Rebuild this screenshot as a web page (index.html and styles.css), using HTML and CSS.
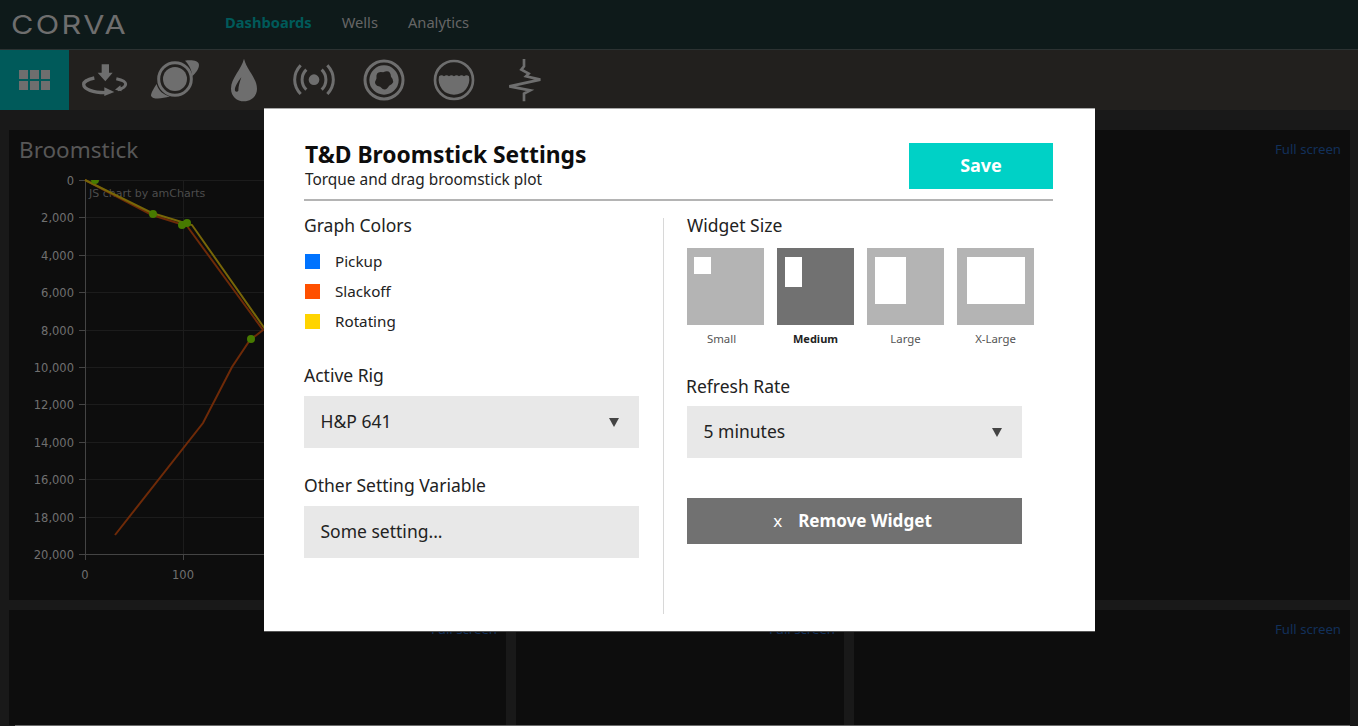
FILE: index.html
```html
<!DOCTYPE html>
<html lang="en">
<head>
  <meta charset="UTF-8" />
  <title>Corva - T&amp;D Broomstick Settings</title>
  <link rel="stylesheet" href="styles.css">
</head>
<body>
  <div class="app">
    <header class="topbar">
      <div class="logo-wrap"><span class="logo">CORVA</span></div>
      <nav class="mainnav">
        <a class="active">Dashboards</a>
        <a>Wells</a>
        <a>Analytics</a>
      </nav>
    </header>

    <div class="toolbar">
      <div class="tool-home">
        <div class="dots"><i></i><i></i><i></i><i></i><i></i><i></i></div>
      </div>
      <svg class="tool tool-a" viewBox="15 30 150 110">
        <path d="M80 37h22v25h11L91 88 68 62h12z"/>
        <path class="line" stroke-width="10" d="M58 78C38 82 26 90 26 97C26 112 55 122 90 122"/>
        <path d="M88 106L118 120L88 132z"/>
        <path class="line" stroke-width="9" d="M124 80C142 84 152 90 152 96C152 104 142 110 128 113"/>
        <path d="M136 100L120 113L140 118z"/>
      </svg>
      <svg class="tool tool-b" viewBox="225 20 150 125">
        <path d="M330 25C350 22 372 25 372 38C372 50 362 62 352 72C350 50 340 35 330 25z"/>
        <path d="M245 95C235 110 228 122 228 130C232 142 260 140 285 132C265 128 250 115 245 95z"/>
        <circle class="line" stroke-width="9" cx="300" cy="80" r="49"/>
        <circle cx="300" cy="80" r="36"/>
      </svg>
      <svg class="tool tool-c" viewBox="465 20 85 132">
        <path d="M507 22C515 55 546 80 546 112C546 135 528 150 507 150C486 150 468 135 468 112C468 80 499 55 507 22z"/>
        <path class="cut" d="M499 78C488 92 478 108 480 118C482 122 488 122 490 118C490 105 494 92 499 78z"/>
      </svg>
      <svg class="tool tool-d" viewBox="25 38 126 94">
        <circle cx="88" cy="85" r="16"/>
        <path class="line" stroke-width="9" d="M65 55C48 72 48 98 65 115M111 55C128 72 128 98 111 115"/>
        <path class="line" stroke-width="9" d="M48 42C24 68 24 102 48 128M128 42C152 68 152 102 128 128"/>
      </svg>
      <svg class="tool tool-e" viewBox="235 20 126 126">
        <circle class="line" stroke-width="9" cx="298" cy="83" r="57"/>
        <circle cx="298" cy="83" r="44"/>
        <path class="cut" d="M295.600 60.100Q317 50.100 319 73.600Q335.200 90.900 313.400 100.100Q302 120.800 286.500 102.900Q263.300 98.500 275.500 78.200Q272.600 54.800 295.600 60.100z"/>
      </svg>
      <svg class="tool tool-f" viewBox="445 20 126 126">
        <circle class="line" stroke-width="8" cx="508" cy="83" r="57"/>
        <path d="M463 72Q471 66 478 72Q486 66 493 72Q500 66 508 72Q516 66 523 72Q531 66 538 72Q546 66 553 72A46 46 0 1 1 463 72z"/>
      </svg>
      <svg class="tool tool-g" viewBox="665 15 105 133">
        <path class="line" stroke-width="8" d="M716 18V40L708 50L730 62L722 70L765 80L672 100L735 112L716 122V145"/>
      </svg>
    </div>

    <main class="board">
      <section class="panel panel-wide">
        <h2 class="panel-title">Broomstick</h2>
        <a class="fullscreen">Full screen</a>
        <svg class="chart" viewBox="0 37 496 433" width="496" height="433">
          <g stroke="#1c1c1c" fill="none">
            <path d="M76 50.500H496M76 87.500H496M76 125.500H496M76 162.500H496M76 200.500H496M76 237.500H496M76 274.500H496M76 312.500H496M76 349.500H496M76 387.500H496M174.500 50V424"/>
          </g>
          <path d="M76.500 50V424.500H496M70 50.500h6M70 87.500h6M70 125.500h6M70 162.500h6M70 200.500h6M70 237.500h6M70 274.500h6M70 312.500h6M70 349.500h6M70 387.500h6M70 424.500h6M76.500 424v6M174.500 424v6" stroke="#444" fill="none"/>
          <g class="ticks" text-anchor="end">
            <text x="65" y="55">0</text>
            <text x="65" y="92">2,000</text>
            <text x="65" y="130">4,000</text>
            <text x="65" y="167">6,000</text>
            <text x="65" y="205">8,000</text>
            <text x="65" y="242">10,000</text>
            <text x="65" y="279">12,000</text>
            <text x="65" y="317">14,000</text>
            <text x="65" y="354">16,000</text>
            <text x="65" y="392">18,000</text>
            <text x="65" y="429">20,000</text>
          </g>
          <g class="ticks" text-anchor="middle">
            <text x="76" y="449">0</text>
            <text x="174" y="449">100</text>
          </g>
          <text class="credit" x="80" y="67">JS chart by amCharts</text>
          <path d="M76 50L143 85L178 96L254 200L241 210L223 237L194 293L106 405" fill="none" stroke="#6e2a08" stroke-width="2"/>
          <path d="M76 50L143 83L183 95L256 199" fill="none" stroke="#776608" stroke-width="2"/>
          <g fill="#477a00">
            <path d="M82 50a4 4 0 0 0 8 0z"/>
            <circle cx="144" cy="84" r="4"/>
            <circle cx="173" cy="95" r="4"/>
            <circle cx="178" cy="93" r="4"/>
            <circle cx="242" cy="209" r="4"/>
          </g>
        </svg>
      </section>
      <section class="panel panel-small">
        <a class="fullscreen">Full screen</a>
      </section>
      <section class="panel panel-small">
        <a class="fullscreen">Full screen</a>
      </section>
      <section class="panel panel-small">
        <a class="fullscreen">Full screen</a>
      </section>
    </main>
    <div class="pagebar"></div>
  </div>

  <div class="modal">
    <div class="modal-head">
      <div class="modal-heading">
        <h1>T&amp;D Broomstick Settings</h1>
        <p>Torque and drag broomstick plot</p>
      </div>
      <button class="btn-save">Save</button>
    </div>

    <div class="modal-body">
      <div class="col col-left">
        <h3>Graph Colors</h3>
        <ul class="colors">
          <li><span class="swatch swatch-blue"></span>Pickup</li>
          <li><span class="swatch swatch-orange"></span>Slackoff</li>
          <li><span class="swatch swatch-yellow"></span>Rotating</li>
        </ul>
        <h3 class="label-rig">Active Rig</h3>
        <div class="field">H&amp;P 641<span class="caret"></span></div>
        <h3 class="label-other">Other Setting Variable</h3>
        <div class="field">Some setting...</div>
      </div>

      <div class="col col-right">
        <h3>Widget Size</h3>
        <div class="sizes">
          <div class="size">
            <div class="size-box"><span class="inner inner-s"></span></div>
            <span class="size-name">Small</span>
          </div>
          <div class="size selected">
            <div class="size-box"><span class="inner inner-m"></span></div>
            <span class="size-name">Medium</span>
          </div>
          <div class="size">
            <div class="size-box"><span class="inner inner-l"></span></div>
            <span class="size-name">Large</span>
          </div>
          <div class="size">
            <div class="size-box"><span class="inner inner-xl"></span></div>
            <span class="size-name">X-Large</span>
          </div>
        </div>
        <h3 class="label-refresh">Refresh Rate</h3>
        <div class="field">5 minutes<span class="caret"></span></div>
        <button class="btn-remove"><span class="x">x</span>Remove Widget</button>
      </div>
    </div>
  </div>
</body>
</html>
```

FILE: styles.css
```css
* {
  box-sizing: border-box;
}

html, body {
  margin: 0;
  height: 100%;
  overflow: hidden;
}

body {
  font-family: "Noto Sans", sans-serif;
  background: #191919;
  color: #222;
}

.app {
  height: 726px;
  display: flex;
  flex-direction: column;
}

/* top nav */
.topbar {
  height: 50px;
  background: #0e1a1a;
  border-bottom: 1px solid #2c3232;
  display: flex;
  align-items: center;
  padding-left: 11px;
}

.logo-wrap {
  width: 214px;
}

.logo {
  display: inline-block;
  font-family: Inter, sans-serif;
  font-weight: 400;
  font-size: 26px;
  letter-spacing: 2px;
  color: #6e6e6e;
  transform: scaleX(1.18);
  transform-origin: left center;
}

.mainnav {
  display: flex;
  gap: 30px;
  font-size: 14.700px;
  color: #666;
  margin-top: -6px;
}

.mainnav .active {
  color: #005a5a;
  font-weight: 700;
}

/* icon row */
.toolbar {
  height: 60px;
  background: #22201e;
  display: flex;
  align-items: center;
}

.tool-home {
  width: 69px;
  height: 60px;
  background: #005a5a;
  display: flex;
  align-items: center;
  justify-content: center;
}

.dots {
  display: grid;
  grid-template-columns: repeat(3, 9px);
  grid-auto-rows: 9px;
  gap: 2px;
}

.dots i {
  background: #6e6e6e;
}

.tool {
  flex: none;
  fill: #6e6e6e;
}

.tool .line {
  fill: none;
  stroke: #6e6e6e;
}

.tool .cut {
  fill: #22201e;
}

.tool-a { width: 50px; margin-left: 11px; }
.tool-b { width: 50px; margin-left: 20px; }
.tool-c { width: 28.330px; margin-left: 30px; }
.tool-d { width: 42px; margin-left: 35px; }
.tool-e { width: 42px; margin-left: 28px; }
.tool-f { width: 42px; margin-left: 28px; }
.tool-g { width: 35px; margin-left: 31.330px; }

/* dashboard behind the dialog */
.board {
  flex: 1;
  display: grid;
  grid-template-columns: 497px 328px 496px;
  grid-template-rows: 470px 115px;
  column-gap: 10px;
  row-gap: 10px;
  padding: 20px 0 0 9px;
}

.panel {
  background: #0d0d0d;
  position: relative;
}

.panel-wide {
  grid-column: 1 / 4;
}

.panel-title {
  margin: 0;
  height: 37px;
  padding: 4px 0 0 10px;
  font-size: 22.500px;
  line-height: 32px;
  font-weight: 400;
  color: #575757;
}

.fullscreen {
  position: absolute;
  top: 10px;
  right: 9px;
  font-size: 13.200px;
  line-height: 19px;
  color: #12305a;
}

.chart {
  display: block;
}

.ticks {
  font-family: "DejaVu Sans", sans-serif;
  font-size: 11.500px;
  fill: #707070;
}

.credit {
  font-family: "DejaVu Sans", sans-serif;
  font-size: 11px;
  fill: #4c4c4c;
}

.pagebar {
  height: 1px;
  margin: 0 8px 0 15px;
  background: #6a6a6a;
}

/* settings dialog */
.modal {
  position: absolute;
  left: 264px;
  top: 108px;
  width: 831px;
  height: 524px;
  background: #fff;
  border-top: 1px solid #a8a8a8;
  border-bottom: 1px solid #555;
  padding: 34px 42px 0 40px;
}

.modal-head {
  height: 58px;
  border-bottom: 2px solid #b4b4b4;
  display: flex;
  justify-content: space-between;
  align-items: flex-start;
}

.modal-heading {
  padding-left: 1px;
  margin-top: -2px;
}

.modal-head h1 {
  margin: 0;
  font-size: 22.800px;
  line-height: 28px;
  font-weight: 700;
  color: #0d0d0d;
}

.modal-head p {
  margin: 2px 0 0;
  font-size: 15.400px;
  line-height: 18px;
  color: #222;
}

.btn-save {
  width: 144px;
  height: 46px;
  padding: 0 0 2px;
  border: none;
  background: #00d1c6;
  color: #fff;
  font: 700 18px "Noto Sans", sans-serif;
}

.modal-body {
  display: flex;
  margin-top: 17px;
}

.col h3 {
  margin: 0;
  padding-bottom: 2px;
  font-size: 17.500px;
  line-height: 20px;
  font-weight: 400;
  color: #222;
}

.col h3:first-child {
  margin-top: -3px;
}

.col-left {
  width: 360px;
  height: 396px;
  padding-right: 24px;
  border-right: 1px solid #d8d8d8;
}

.col-right {
  width: 347px;
  margin-left: 23px;
}

.colors {
  list-style: none;
  margin: 9px 0 0;
  padding: 0;
}

.colors li {
  display: flex;
  align-items: center;
  height: 30px;
  font-size: 15.200px;
  color: #222;
}

.swatch {
  width: 15px;
  height: 15px;
  margin: 0 15px 0 1px;
}

.swatch-blue { background: #0073ff; }
.swatch-orange { background: #ff5000; }
.swatch-yellow { background: #ffd400; }

.col-left .label-rig {
  margin-top: 29px;
}

.col-left .label-other {
  margin-top: 27px;
}

.field {
  position: relative;
  width: 335px;
  height: 52px;
  margin-top: 9px;
  padding-left: 16.500px;
  background: #e8e8e8;
  font-size: 17.500px;
  line-height: 50px;
  color: #222;
}

.col-right .field {
  margin-top: 8px;
}

.caret {
  position: absolute;
  right: 20px;
  top: 22px;
  border-left: 5px solid transparent;
  border-right: 5px solid transparent;
  border-top: 9px solid #444;
}

.sizes {
  display: flex;
  gap: 13px;
  margin-top: 11px;
}

.size {
  flex: none;
  width: 77px;
  text-align: center;
}

.size-box {
  height: 77px;
  background: #b4b4b4;
  position: relative;
}

.selected .size-box {
  background: #717171;
}

.inner {
  position: absolute;
  top: 9px;
  background: #fff;
}

.inner-s { left: 7px; width: 17px; height: 17px; }
.inner-m { left: 8px; width: 17px; height: 30px; }
.inner-l { left: 8px; width: 31px; height: 47px; }
.inner-xl { left: 10px; width: 58px; height: 47px; }

.size-name {
  display: block;
  margin-top: 5px;
  font-size: 11.400px;
  line-height: 17px;
  color: #555;
}

.size:first-child .size-name {
  padding-right: 8px;
}

.selected .size-name {
  font-size: 11px;
  font-weight: 700;
  color: #222;
}

.col-right .label-refresh {
  margin-top: 29px;
  margin-left: -1px;
}

.btn-remove {
  display: block;
  width: 335px;
  height: 46px;
  margin-top: 40px;
  padding: 0 4px 2px 0;
  border: none;
  background: #717171;
  color: #fff;
  font: 700 17.100px "Noto Sans", sans-serif;
}

.btn-remove .x {
  font-weight: 400;
  font-size: 17px;
  margin-right: 16px;
}
```
